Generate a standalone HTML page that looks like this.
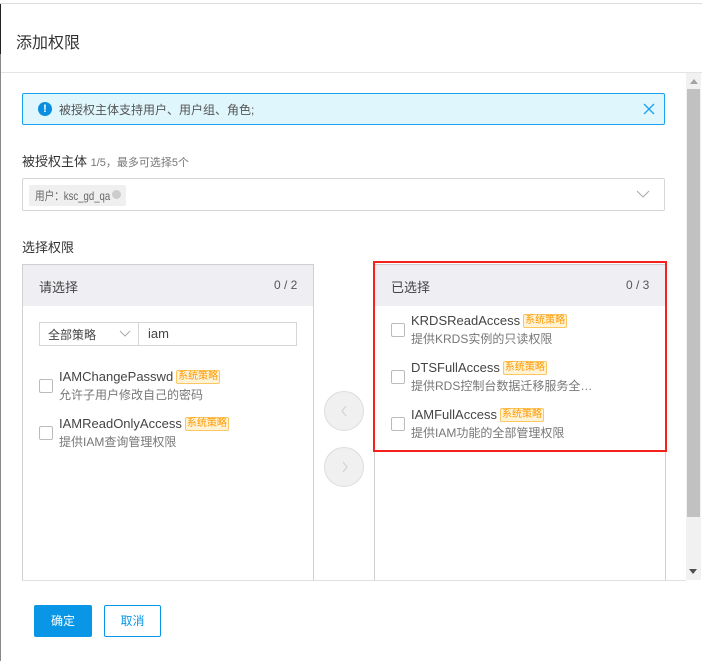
<!DOCTYPE html>
<html><head><meta charset="utf-8"><style>
*{box-sizing:border-box;margin:0;padding:0}
body{width:702px;height:661px;position:relative;background:#fff;font-family:"Liberation Sans","Noto Sans CJK SC",sans-serif;color:#333;overflow:hidden}
.a{position:absolute}
.tag{display:inline-block;font-size:10px;color:#f90;background:#fff3d6;border:1px solid #fcc663;border-radius:2px;padding:0 1px;line-height:12px;vertical-align:2px;margin-left:3px}
.cb{position:absolute;width:14px;height:14px;border:1px solid #bbb;border-radius:2px;background:#fff}
.t1{font-size:13px;color:#444;line-height:16px;white-space:nowrap}
.t2{font-size:12px;color:#777;line-height:16px;white-space:nowrap}
</style></head><body>
<div class="a" style="left:0;top:3px;width:702px;height:1px;background:#ddd"></div>
<div class="a" style="left:0;top:4px;width:1px;height:50px;background:#222"></div>
<div class="a" style="left:0;top:54px;width:1px;height:607px;background:#888"></div>
<div class="a" style="left:16px;top:29px;font-size:16px;color:#333">添加权限</div>
<div class="a" style="left:1px;top:72px;width:701px;height:1px;background:#e4e4e4"></div>
<div class="a" style="left:686px;top:73px;width:15px;height:507px;background:#f1f1f1"></div>
<div class="a" style="left:687px;top:89px;width:13px;height:428px;background:#c1c1c1"></div>
<div class="a" style="left:690px;top:79px;width:0;height:0;border-left:4px solid transparent;border-right:4px solid transparent;border-bottom:5px solid #a3a3a3"></div>
<div class="a" style="left:689px;top:569px;width:0;height:0;border-left:4px solid transparent;border-right:4px solid transparent;border-top:5px solid #505050"></div>
<div class="a" style="left:22px;top:93px;width:643px;height:32px;background:#dff6fd;border:1px solid #1ba1ee;border-radius:2px"></div>
<div class="a" style="left:38px;top:102px;width:14px;height:14px;border-radius:50%;background:#0a8fe0;color:#fff;font-size:11px;font-weight:bold;text-align:center;line-height:14px">!</div>
<div class="a" style="left:59px;top:101px;font-size:12px;color:#555">被授权主体支持用户、用户组、角色;</div>
<svg class="a" style="left:643px;top:103px" width="12" height="12"><path d="M1 1 L11 11 M11 1 L1 11" stroke="#1ba1ee" stroke-width="1.3"/></svg>
<div class="a" style="left:22px;top:151px;font-size:13px;color:#333">被授权主体 <span style="font-size:11px;color:#777">1/5，最多可选择5个</span></div>
<div class="a" style="left:22px;top:178px;width:643px;height:33px;border:1px solid #d6d6d6;border-radius:2px"></div>
<div class="a" style="left:29px;top:185px;width:97px;height:21px;background:#efefef;border-radius:2px"></div>
<div class="a" style="left:35px;top:187px;font-size:12px;color:#666;white-space:nowrap;transform:scaleX(0.8);transform-origin:left">用户：ksc_gd_qa</div>
<div class="a" style="left:112px;top:190px;width:9px;height:9px;border-radius:50%;background:#ccc"></div>
<svg class="a" style="left:636px;top:189px" width="14" height="10"><path d="M1 2 L7 8 L13 2" fill="none" stroke="#aaa" stroke-width="1"/></svg>
<div class="a" style="left:22px;top:237px;font-size:13px;color:#333">选择权限</div>
<div class="a" style="left:22px;top:264px;width:292px;height:317px;border:1px solid #d0d0d0;border-bottom:none"></div>
<div class="a" style="left:23px;top:265px;width:290px;height:41px;background:#efeff3"></div>
<div class="a" style="left:39px;top:277px;font-size:13px;color:#444">请选择</div>
<div class="a" style="left:274px;top:278px;font-size:12px;color:#555">0 / 2</div>
<div class="a" style="left:39px;top:322px;width:258px;height:24px;border:1px solid #d6d6d6"></div>
<div class="a" style="left:138px;top:322px;width:1px;height:24px;background:#d6d6d6"></div>
<div class="a" style="left:48px;top:326px;font-size:12px;color:#444">全部策略</div>
<svg class="a" style="left:119px;top:330px" width="12" height="8"><path d="M1 1 L6 6 L11 1" fill="none" stroke="#aaa"/></svg>
<div class="a" style="left:148px;top:326px;font-size:13px;color:#444">iam</div>
<div class="cb" style="left:39px;top:379px"></div>
<div class="a t1" style="left:59px;top:369px">IAMChangePasswd<span class="tag">系统策略</span></div>
<div class="a t2" style="left:59px;top:387px">允许子用户修改自己的密码</div>
<div class="cb" style="left:39px;top:426px"></div>
<div class="a t1" style="left:59px;top:416px">IAMReadOnlyAccess<span class="tag">系统策略</span></div>
<div class="a t2" style="left:59px;top:434px">提供IAM查询管理权限</div>
<div class="a" style="left:324px;top:391px;width:40px;height:40px;border-radius:50%;background:#f0f0f0;border:1px solid #ddd"></div>
<svg class="a" style="left:339px;top:404px" width="10" height="14"><path d="M7 2 L3 7 L7 12" fill="none" stroke="#ccc"/></svg>
<div class="a" style="left:324px;top:447px;width:40px;height:40px;border-radius:50%;background:#f0f0f0;border:1px solid #ddd"></div>
<svg class="a" style="left:340px;top:460px" width="10" height="14"><path d="M3 2 L7 7 L3 12" fill="none" stroke="#ccc"/></svg>
<div class="a" style="left:374px;top:264px;width:292px;height:317px;border:1px solid #d0d0d0;border-bottom:none"></div>
<div class="a" style="left:375px;top:265px;width:290px;height:41px;background:#efeff3"></div>
<div class="a" style="left:391px;top:277px;font-size:13px;color:#444">已选择</div>
<div class="a" style="left:626px;top:278px;font-size:12px;color:#555">0 / 3</div>
<div class="cb" style="left:391px;top:323px"></div>
<div class="a t1" style="left:411px;top:313px">KRDSReadAccess<span class="tag">系统策略</span></div>
<div class="a t2" style="left:411px;top:331px">提供KRDS实例的只读权限</div>
<div class="cb" style="left:391px;top:370px"></div>
<div class="a t1" style="left:411px;top:360px">DTSFullAccess<span class="tag">系统策略</span></div>
<div class="a t2" style="left:411px;top:378px">提供RDS控制台数据迁移服务全…</div>
<div class="cb" style="left:391px;top:417px"></div>
<div class="a t1" style="left:411px;top:407px">IAMFullAccess<span class="tag">系统策略</span></div>
<div class="a t2" style="left:411px;top:425px">提供IAM功能的全部管理权限</div>
<div class="a" style="left:373px;top:261px;width:294px;height:191px;border:2px solid #f5221b"></div>
<div class="a" style="left:22px;top:580px;width:664px;height:1px;background:#e0e0e0"></div>
<div class="a" style="left:34px;top:605px;width:58px;height:32px;background:#0996e6;border-radius:2px;color:#fff;font-size:12px;text-align:center;line-height:32px">确定</div>
<div class="a" style="left:104px;top:605px;width:57px;height:32px;border:1px solid #0996e6;border-radius:2px;color:#0996e6;font-size:12px;text-align:center;line-height:30px">取消</div>
</body></html>
